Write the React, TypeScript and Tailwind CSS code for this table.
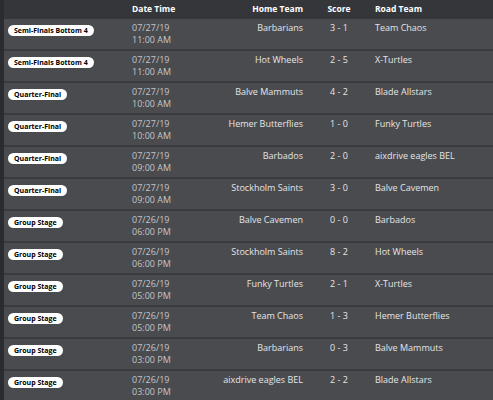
import React from 'react';

type Match = {
  stage: string;
  date: string;
  time: string;
  home: string;
  score: string;
  road: string;
};

const matches: Match[] = [
  { stage: 'Semi-Finals Bottom 4', date: '07/27/19', time: '11:00 AM', home: 'Barbarians', score: '3 - 1', road: 'Team Chaos' },
  { stage: 'Semi-Finals Bottom 4', date: '07/27/19', time: '11:00 AM', home: 'Hot Wheels', score: '2 - 5', road: 'X-Turtles' },
  { stage: 'Quarter-Final', date: '07/27/19', time: '10:00 AM', home: 'Balve Mammuts', score: '4 - 2', road: 'Blade Allstars' },
  { stage: 'Quarter-Final', date: '07/27/19', time: '10:00 AM', home: 'Hemer Butterflies', score: '1 - 0', road: 'Funky Turtles' },
  { stage: 'Quarter-Final', date: '07/27/19', time: '09:00 AM', home: 'Barbados', score: '2 - 0', road: 'aixdrive eagles BEL' },
  { stage: 'Quarter-Final', date: '07/27/19', time: '09:00 AM', home: 'Stockholm Saints', score: '3 - 0', road: 'Balve Cavemen' },
  { stage: 'Group Stage', date: '07/26/19', time: '06:00 PM', home: 'Balve Cavemen', score: '0 - 0', road: 'Barbados' },
  { stage: 'Group Stage', date: '07/26/19', time: '06:00 PM', home: 'Stockholm Saints', score: '8 - 2', road: 'Hot Wheels' },
  { stage: 'Group Stage', date: '07/26/19', time: '05:00 PM', home: 'Funky Turtles', score: '2 - 1', road: 'X-Turtles' },
  { stage: 'Group Stage', date: '07/26/19', time: '05:00 PM', home: 'Team Chaos', score: '1 - 3', road: 'Hemer Butterflies' },
  { stage: 'Group Stage', date: '07/26/19', time: '03:00 PM', home: 'Barbarians', score: '0 - 3', road: 'Balve Mammuts' },
  { stage: 'Group Stage', date: '07/26/19', time: '03:00 PM', home: 'aixdrive eagles BEL', score: '2 - 2', road: 'Blade Allstars' },
];

export default function App() {
  return (
    <div
      className="w-[493px] h-[400px] overflow-hidden bg-[#48494d] border-l-4 border-[#2b2c30]"
      style={{ fontFamily: '"Open Sans", Lato, sans-serif' }}
    >
      {/* Header */}
      <div className="flex h-[19px] items-center bg-[#35363a] text-[8.5px] font-bold text-white">
        <div className="w-[128px]" />
        <div className="w-[80px]">Date Time</div>
        <div className="w-[91px] text-right">Home Team</div>
        <div className="w-[72px] text-center">Score</div>
        <div className="flex-1">Road Team</div>
      </div>

      {/* Rows */}
      {matches.map((m, i) => (
        <div
          key={i}
          className="flex h-[32px] items-start border-b-2 border-[#3a3b3f] bg-[#4a4b4f] text-[9px] leading-[12px]"
        >
          <div className="w-[128px] pl-[4px] pt-[5px]">
            <span className="inline-block rounded-full bg-white px-[6px] text-[7px] font-bold leading-[11px] text-black">
              {m.stage}
            </span>
          </div>
          <div className="w-[80px] pt-[3px] text-[#c4c5c8]">
            <div>{m.date}</div>
            <div>{m.time}</div>
          </div>
          <div className="w-[91px] pt-[3px] text-right text-[#e4e5e7] whitespace-nowrap">{m.home}</div>
          <div className="w-[72px] pt-[3px] text-center text-[#e4e5e7]">{m.score}</div>
          <div className="flex-1 pt-[3px] text-[#e4e5e7] whitespace-nowrap">{m.road}</div>
        </div>
      ))}
    </div>
  );
}
